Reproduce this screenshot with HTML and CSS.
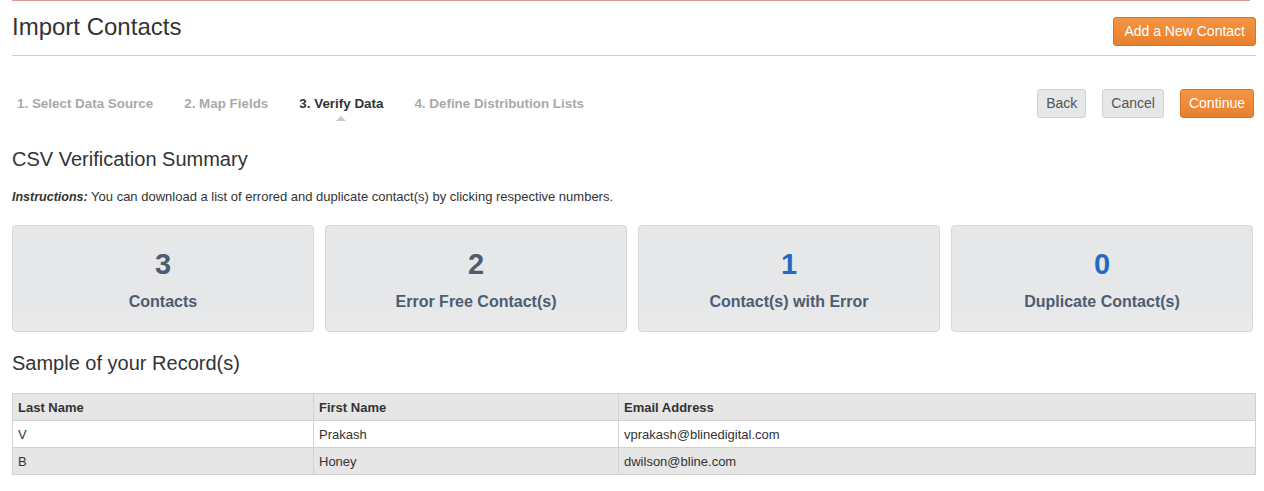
FILE: index.html
```html
<!DOCTYPE html>
<html>
<head>
<meta charset="utf-8">
<link rel="stylesheet" href="styles.css">
</head>
<body>
<div class="page">
  <div class="topline"></div>
  <div class="header">
    <h1 class="title">Import Contacts</h1>
    <button class="btn btn-orange btn-add">Add a New Contact</button>
  </div>
  <div class="toolbar">
    <ul class="steps">
      <li class="step">1. Select Data Source</li>
      <li class="step">2. Map Fields</li>
      <li class="step active">3. Verify Data</li>
      <li class="step">4. Define Distribution Lists</li>
    </ul>
    <div class="actions">
      <button class="btn btn-gray">Back</button>
      <button class="btn btn-gray">Cancel</button>
      <button class="btn btn-orange">Continue</button>
    </div>
  </div>
  <h2 class="section-title">CSV Verification Summary</h2>
  <p class="instructions"><b class="lead">Instructions:</b> You can download a list of errored and duplicate contact(s) by clicking respective numbers.</p>
  <div class="cards">
    <div class="card"><div class="num">3</div><div class="label">Contacts</div></div>
    <div class="card"><div class="num">2</div><div class="label">Error Free Contact(s)</div></div>
    <div class="card"><div class="num link">1</div><div class="label">Contact(s) with Error</div></div>
    <div class="card"><div class="num link">0</div><div class="label">Duplicate Contact(s)</div></div>
  </div>
  <h2 class="section-title sample">Sample of your Record(s)</h2>
  <table class="records">
    <thead>
      <tr><th class="c1">Last Name</th><th class="c2">First Name</th><th>Email Address</th></tr>
    </thead>
    <tbody>
      <tr><td>V</td><td>Prakash</td><td>vprakash@blinedigital.com</td></tr>
      <tr class="alt"><td>B</td><td>Honey</td><td>dwilson@bline.com</td></tr>
    </tbody>
  </table>
</div>
</body>
</html>
```

FILE: styles.css
```css
html, body {
  margin: 0;
  padding: 0;
  background: #fff;
  font-family: "Liberation Sans", Arial, sans-serif;
  color: #333;
}
.page {
  padding: 0 8px 0 12px;
}
.topline {
  height: 1px;
  background: #d99a94;
  margin-right: 6px;
}
.header {
  display: flex;
  justify-content: space-between;
  align-items: flex-start;
  border-bottom: 1px solid #cfcfcf;
  height: 54px;
}
.title {
  margin: 12px 0 0;
  font-size: 24px;
  font-weight: normal;
  line-height: 28px;
  color: #333;
}
.btn {
  font-family: "Liberation Sans", Arial, sans-serif;
  font-size: 14px;
  border-radius: 3px;
  cursor: pointer;
  padding: 0 8px;
  height: 29px;
  line-height: 27px;
}
.btn-orange {
  background: linear-gradient(#f59443, #e8812f);
  border: 1px solid #d5742a;
  color: #fff;
}
.btn-gray {
  background: #e6e7e8;
  border: 1px solid #d2d2d2;
  color: #555;
}
.btn-add {
  margin-top: 16px;
  padding: 0 10px;
}
.toolbar {
  display: flex;
  justify-content: space-between;
  align-items: center;
  margin-top: 32px;
  height: 30px;
}
.steps {
  list-style: none;
  margin: 0;
  padding: 0 0 0 5px;
  display: flex;
  gap: 31px;
}
.step {
  font-size: 13.4px;
  font-weight: bold;
  color: #a9a9a9;
  position: relative;
}
.step.active {
  color: #333;
}
.step.active::after {
  content: "";
  position: absolute;
  left: 50%;
  margin-left: -5px;
  top: 20px;
  border-left: 5px solid transparent;
  border-right: 5px solid transparent;
  border-bottom: 5px solid #c8c8c8;
}
.actions {
  display: flex;
  gap: 16px;
  margin-right: 2px;
}
.section-title {
  font-size: 20px;
  font-weight: normal;
  margin: 29px 0 0;
  line-height: 24px;
  color: #333;
}
.instructions {
  font-size: 13px;
  margin: 18px 0 0;
  line-height: 16px;
  color: #333;
}
.instructions .lead {
  font-size: 12.5px;
  font-style: italic;
}
.cards {
  display: grid;
  grid-template-columns: repeat(4, 1fr);
  gap: 11px;
  margin-top: 20px;
  margin-right: 3px;
}
.card {
  background: linear-gradient(#e6e7e9 75%, #ebebeb);
  border: 1px solid #d8d8d8;
  border-radius: 4px;
  height: 105px;
  text-align: center;
  color: #4d5c72;
  font-weight: bold;
}
.num {
  font-size: 29px;
  margin-top: 22px;
  line-height: 32px;
}
.num.link {
  color: #1e6bc0;
}
.label {
  font-size: 16px;
  margin-top: 12px;
  line-height: 20px;
}
.section-title.sample {
  margin-top: 19px;
}
.records {
  width: 100%;
  border-collapse: collapse;
  margin-top: 18px;
  font-size: 13px;
}
.records th, .records td {
  border: 1px solid #d2d2d2;
  text-align: left;
  padding: 0 5px;
  height: 26px;
  color: #333;
}
.records th {
  background: #e6e6e6;
  font-weight: bold;
}
.records .c1 { width: 290px; }
.records .c2 { width: 294px; }
.records tr.alt td {
  background: #e6e6e6;
}
```
